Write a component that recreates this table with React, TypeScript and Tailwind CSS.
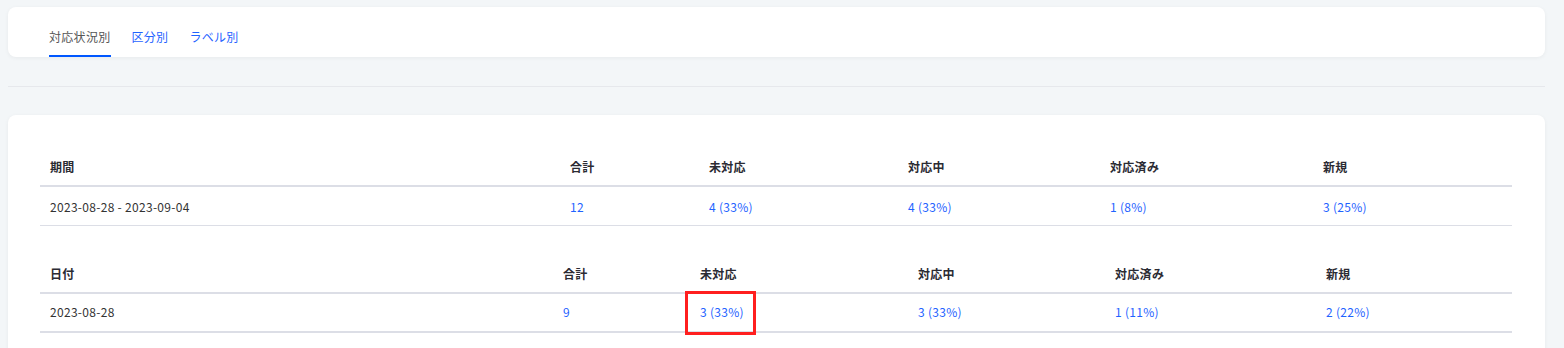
import React from 'react';

interface Col {
  header: string;
  width: string;
}

const summaryCols: Col[] = [
  { header: '期間', width: 'w-[520px]' },
  { header: '合計', width: 'w-[139px]' },
  { header: '未対応', width: 'w-[199px]' },
  { header: '対応中', width: 'w-[202px]' },
  { header: '対応済み', width: 'w-[213px]' },
  { header: '新規', width: 'w-[199px]' },
];

const dailyCols: Col[] = [
  { header: '日付', width: 'w-[513px]' },
  { header: '合計', width: 'w-[137px]' },
  { header: '未対応', width: 'w-[218px]' },
  { header: '対応中', width: 'w-[197px]' },
  { header: '対応済み', width: 'w-[211px]' },
  { header: '新規', width: 'w-[196px]' },
];

const tabs = [
  { label: '対応状況別', active: true },
  { label: '区分別', active: false },
  { label: 'ラベル別', active: false },
];

function Link({ children }: { children: React.ReactNode }) {
  return <span className="text-[#1f63ff] cursor-pointer">{children}</span>;
}

export default function App() {
  return (
    <div
      className="w-[1564px] h-[348px] overflow-hidden bg-[#f3f6f8] text-[12px] tracking-[0.3px] text-[#333]"
      style={{ fontFamily: '"Noto Sans CJK JP", "Noto Sans", sans-serif' }}
    >
      <div className="w-[1537px] ml-2 pt-[7px]">
        {/* tabs card */}
        <div className="h-[50px] bg-white rounded-lg shadow-[0_1px_4px_rgba(0,0,0,0.05)] flex items-end pl-[41px] gap-[21px]">
          {tabs.map((t) => (
            <div
              key={t.label}
              className={
                t.active
                  ? 'h-[40px] flex items-center border-b-2 border-[#0057ff] text-[#555] pt-[2px]'
                  : 'h-[40px] flex items-center border-b-2 border-transparent text-[#1f63ff] pt-[2px]'
              }
            >
              {t.label}
            </div>
          ))}
        </div>

        <div className="h-px bg-[#e6e8ec] mt-[29px]" />

        {/* tables card */}
        <div className="mt-[28px] bg-white rounded-lg shadow-[0_1px_4px_rgba(0,0,0,0.05)] px-8 pt-[33px] pb-6">
          <table className="w-[1472px] table-fixed border-collapse text-left">
            <thead>
              <tr className="border-b-2 border-[#dcdee6]">
                {summaryCols.map((c) => (
                  <th key={c.header} className={`${c.width} h-[38px] px-[10px] font-bold text-[#2b2b33]`}>
                    {c.header}
                  </th>
                ))}
              </tr>
            </thead>
            <tbody>
              <tr className="border-b border-[#dcdee6]">
                <td className="h-[39px] px-[10px] pt-[2px]">2023-08-28 - 2023-09-04</td>
                <td className="px-[10px] pt-[2px]"><Link>12</Link></td>
                <td className="px-[10px] pt-[2px]"><Link>4 (33%)</Link></td>
                <td className="px-[10px] pt-[2px]"><Link>4 (33%)</Link></td>
                <td className="px-[10px] pt-[2px]"><Link>1 (8%)</Link></td>
                <td className="px-[10px] pt-[2px]"><Link>3 (25%)</Link></td>
              </tr>
            </tbody>
          </table>

          <table className="w-[1472px] table-fixed border-collapse text-left mt-[29px]">
            <thead>
              <tr className="border-b-2 border-[#dcdee6]">
                {dailyCols.map((c) => (
                  <th key={c.header} className={`${c.width} h-[38px] px-[10px] pt-[2px] font-bold text-[#2b2b33]`}>
                    {c.header}
                  </th>
                ))}
              </tr>
            </thead>
            <tbody>
              <tr className="border-b-2 border-[#dcdee6]">
                <td className="h-[39px] px-[10px]">2023-08-28</td>
                <td className="px-[10px]"><Link>9</Link></td>
                <td className="px-[10px] relative">
                  <Link>3 (33%)</Link>
                  <div className="absolute left-[-5px] top-[-3px] w-[71px] h-[44px] border-[3px] border-[#ff1f1f]" />
                </td>
                <td className="px-[10px]"><Link>3 (33%)</Link></td>
                <td className="px-[10px]"><Link>1 (11%)</Link></td>
                <td className="px-[10px]"><Link>2 (22%)</Link></td>
              </tr>
            </tbody>
          </table>
        </div>
      </div>
    </div>
  );
}
